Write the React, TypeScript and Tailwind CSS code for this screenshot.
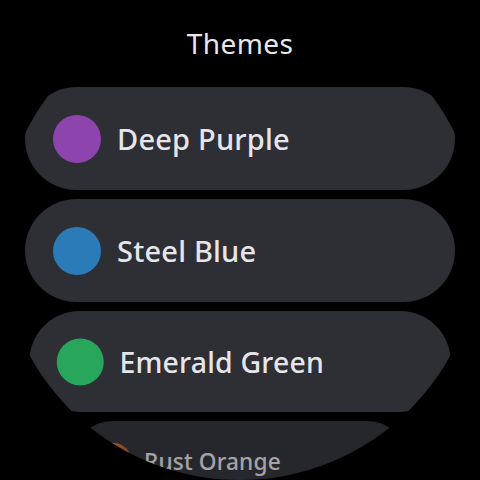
import React from "react";

type Theme = { name: string; color: string };

const themes: Theme[] = [
  { name: "Deep Purple", color: "bg-[#8e44ad]" },
  { name: "Steel Blue", color: "bg-[#2b7bb9]" },
  { name: "Emerald Green", color: "bg-[#27a65c]" },
  { name: "Rust Orange", color: "bg-[#d2601a]" },
];

const ThemeChip = ({ theme, className }: { theme: Theme; className: string }) => {
  return (
    <div
      className={`flex h-[103px] w-[430px] shrink-0 items-center rounded-full pl-[28px] ${className}`}
    >
      <div className={`h-[48px] w-[48px] shrink-0 rounded-full ${theme.color}`} />
      <span className="ml-[16px] text-[29px] font-medium leading-[34px] tracking-[0.2px] text-[#e6e6ea]">
        {theme.name}
      </span>
    </div>
  );
};

const App = () => {
  return (
    <div className="h-[480px] w-[480px] bg-black" style={{ fontFamily: "'Noto Sans', Roboto, sans-serif" }}>
      <div className="flex h-[480px] w-[480px] flex-col items-center overflow-hidden rounded-full bg-black pt-[24px]">
        <h1 className="text-[28px] font-normal leading-[38px] tracking-[0.4px] text-[#e8e8ea]">Themes</h1>
        <div className="mt-[25px] flex flex-col items-center gap-[9px]">
          <ThemeChip theme={themes[0]} className="bg-[#2e2f35]" />
          <ThemeChip theme={themes[1]} className="bg-[#2e2f35]" />
          <ThemeChip theme={themes[2]} className="origin-top scale-[0.98] bg-[#2e2f35]" />
          <ThemeChip
            theme={themes[3]}
            className="-mt-[2px] origin-top scale-[0.78] bg-[#26272c] [&>*]:opacity-65"
          />
        </div>
      </div>
    </div>
  );
};

export default App;
